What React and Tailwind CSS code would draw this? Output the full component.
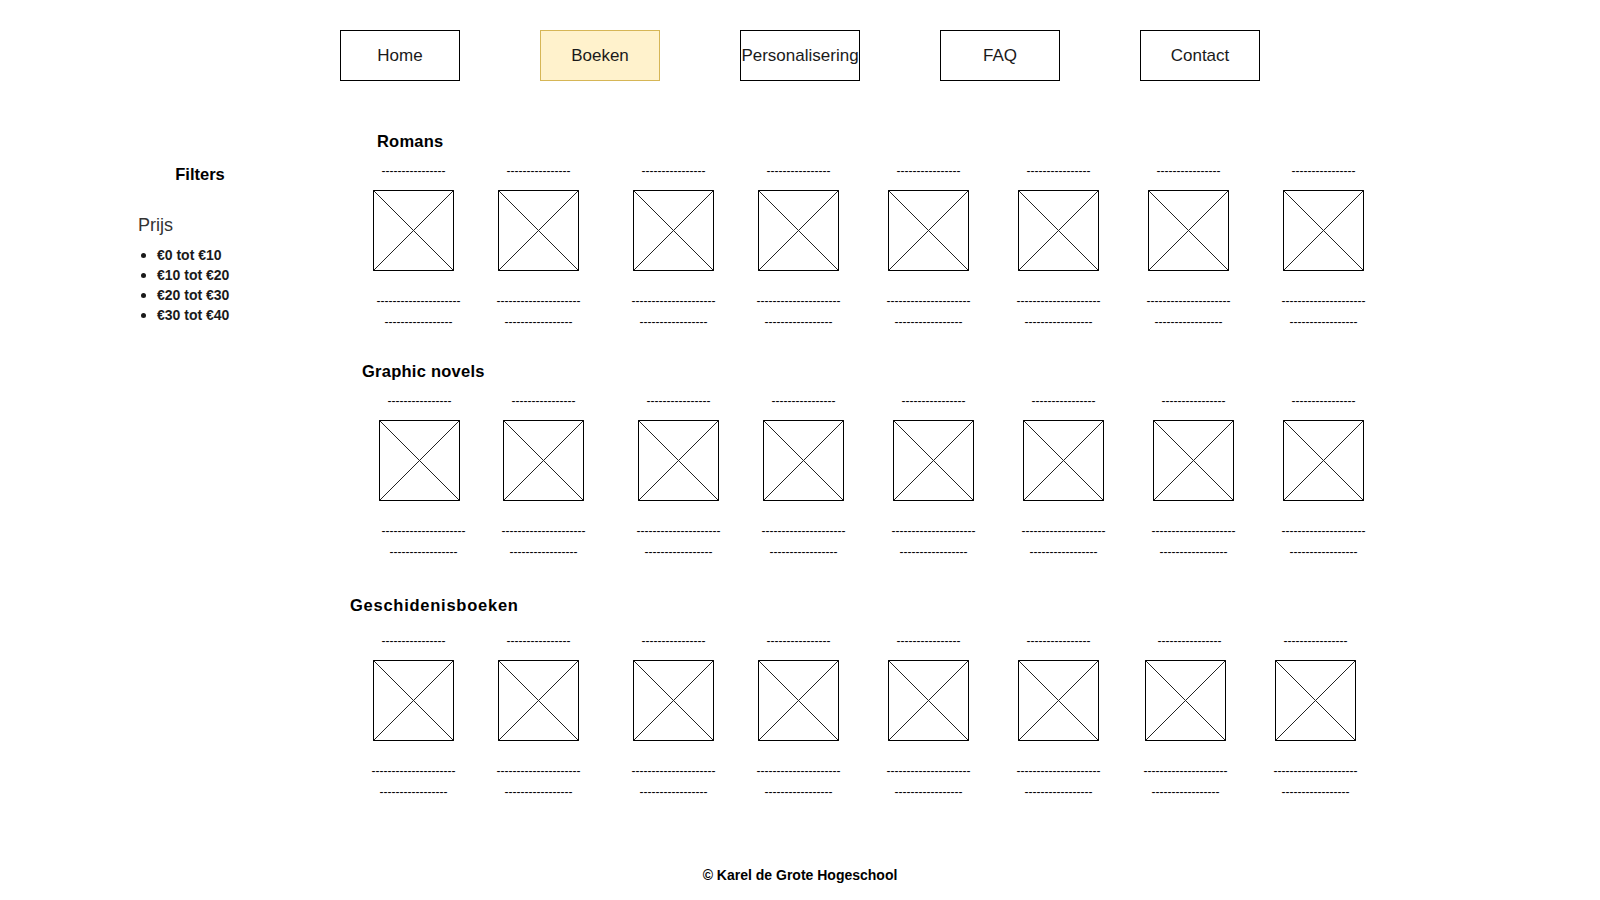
import React from "react";

const NAV = [
  { label: "Home", active: false },
  { label: "Boeken", active: true },
  { label: "Personalisering", active: false },
  { label: "FAQ", active: false },
  { label: "Contact", active: false },
];

const PRICES = ["€0 tot €10", "€10 tot €20", "€20 tot €30", "€30 tot €40"];

const SECTIONS = [
  {
    title: "Romans",
    wrap: "mt-0",
    head: "ml-[37px] tracking-[0.2px]",
    dashGap: "mt-[12px]",
    cols: [
      { ml: "ml-[33px]", bottom: "translate-x-[5px]" },
      { ml: "ml-[44px]" },
      { ml: "ml-[54px]" },
      { ml: "ml-[44px]" },
      { ml: "ml-[49px]" },
      { ml: "ml-[49px]" },
      { ml: "ml-[49px]" },
      { ml: "ml-[54px]" },
    ],
  },
  {
    title: "Graphic novels",
    wrap: "mt-[31px]",
    head: "ml-[22px] tracking-[0.25px]",
    dashGap: "mt-[12px]",
    cols: [
      { ml: "ml-[39px]", bottom: "translate-x-[4px]" },
      { ml: "ml-[43px]" },
      { ml: "ml-[54px]" },
      { ml: "ml-[44px]" },
      { ml: "ml-[49px]" },
      { ml: "ml-[49px]" },
      { ml: "ml-[49px]" },
      { ml: "ml-[49px]" },
    ],
  },
  {
    title: "Geschidenisboeken",
    wrap: "mt-[35px]",
    head: "ml-[10px] tracking-[0.75px]",
    dashGap: "mt-[18px]",
    cols: [
      { ml: "ml-[33px]" },
      { ml: "ml-[44px]" },
      { ml: "ml-[54px]" },
      { ml: "ml-[44px]" },
      { ml: "ml-[49px]" },
      { ml: "ml-[49px]" },
      { ml: "ml-[46px]", top: "translate-x-[4px]" },
      { ml: "ml-[49px]" },
    ],
  },
];

function Placeholder() {
  return (
    <svg width="81" height="81" viewBox="0 0 81 81" className="block">
      <rect x="0.5" y="0.5" width="80" height="80" fill="#ffffff" stroke="#000000" strokeWidth="1" />
      <line x1="0.5" y1="0.5" x2="80.5" y2="80.5" stroke="#222222" strokeWidth="1" />
      <line x1="80.5" y1="0.5" x2="0.5" y2="80.5" stroke="#222222" strokeWidth="1" />
    </svg>
  );
}

function Dash({ n, cls = "" }) {
  return (
    <div className={"h-[14px] leading-[14px] text-[12px] whitespace-nowrap text-black " + cls}>
      {"-".repeat(n)}
    </div>
  );
}

function Column({ col }) {
  return (
    <div className={"w-[81px] shrink-0 flex flex-col items-center " + col.ml}>
      <Dash n={16} cls={col.top || ""} />
      <div className="mt-[12px]">
        <Placeholder />
      </div>
      <Dash n={21} cls={"mt-[23px] " + (col.bottom || "")} />
      <Dash n={17} cls={"mt-[7px] " + (col.bottom || "")} />
    </div>
  );
}

function Section({ s }) {
  return (
    <section className={"flex flex-col " + s.wrap}>
      <h2 className={"h-[22px] leading-[22px] text-[16.5px] font-bold text-black whitespace-nowrap " + s.head}>
        {s.title}
      </h2>
      <div className={"flex " + s.dashGap}>
        {s.cols.map((c, i) => (
          <Column key={i} col={c} />
        ))}
      </div>
    </section>
  );
}

export default function App() {
  return (
    <div className="w-[1600px] h-[900px] bg-white flex flex-col font-['Liberation_Sans',Arial,Helvetica,sans-serif] text-black">
      <nav className="flex justify-center gap-[80px] pt-[30px]">
        {NAV.map((n) => (
          <div
            key={n.label}
            className={
              "w-[120px] h-[51px] flex items-center justify-center whitespace-nowrap text-[17px] text-[#1a1a1a] border " +
              (n.active ? "bg-[#fff2cc] border-[#d6b656]" : "bg-white border-black")
            }
          >
            {n.label}
          </div>
        ))}
      </nav>

      <div className="flex mt-[49px]">
        <aside className="w-[340px] shrink-0 flex flex-col">
          <div className="ml-[150px] w-[100px] mt-[33px] h-[22px] leading-[22px] text-center text-[16.5px] font-bold">
            Filters
          </div>
          <div className="ml-[138px] mt-[29px] h-[22px] leading-[22px] text-[18px] text-[#333333]">Prijs</div>
          <ul className="mt-[9px] flex flex-col">
            {PRICES.map((p) => (
              <li key={p} className="h-[20px] flex items-center pl-[141px]">
                <span className="w-[5px] h-[5px] rounded-full bg-[#1a1a1a] shrink-0" />
                <span className="ml-[11px] text-[14px] font-bold text-[#1a1a1a] whitespace-nowrap">{p}</span>
              </li>
            ))}
          </ul>
        </aside>

        <main className="flex flex-col">
          {SECTIONS.map((s) => (
            <Section key={s.title} s={s} />
          ))}
        </main>
      </div>

      <footer className="mt-auto mb-[14px] h-[22px] leading-[22px] text-center text-[14px] font-bold text-black">
        © Karel de Grote Hogeschool
      </footer>
    </div>
  );
}
